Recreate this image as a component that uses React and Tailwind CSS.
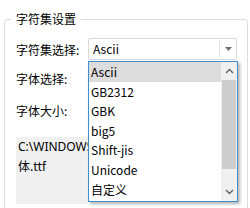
import React from 'react';

const items = ['Ascii', 'GB2312', 'GBK', 'big5', 'Shift-jis', 'Unicode', '自定义'];

function Chevron({ up }) {
  return (
    <svg width="9" height="6" viewBox="0 0 9 6">
      <path d={up ? 'M1 5 L4.5 1.5 L8 5' : 'M1 1 L4.5 4.5 L8 1'} fill="none" stroke="#606060" strokeWidth="1.4" />
    </svg>
  );
}

export default function App() {
  return (
    <div
      className="relative w-[250px] h-[208px] overflow-hidden bg-white text-[12px] text-black"
      style={{ fontFamily: '"Noto Sans CJK SC", "Noto Sans", sans-serif' }}
    >
      <div className="pt-[19px] pl-[4px] pr-[2px]">
        {/* group box */}
        <div className="relative h-[220px] rounded-[3px] border border-[#dcdcdc] pl-[11px] pt-[18px]">
          <div className="absolute left-[6px] top-[-10px] bg-white px-[5px] leading-[18px]">字符集设置</div>

          <div className="flex items-center h-[22px]">
            <span className="w-[72px] leading-[22px] pt-[1px]">字符集选择:</span>
            <div className="flex h-[22px] w-[149px] items-center rounded-[2px] border border-[#d9d9d9] bg-white">
              <span className="flex-1 pl-[4px] leading-[20px]">Ascii</span>
              <div className="flex h-[16px] w-[17px] items-center justify-center border-l border-[#e3e3e3]">
                <svg width="7" height="4" viewBox="0 0 7 4">
                  <path d="M0 0 H7 L3.5 4 Z" fill="#707070" />
                </svg>
              </div>
            </div>
          </div>

          <div className="mt-[10px] leading-[18px]">字体选择:</div>
          <div className="mt-[14px] leading-[18px]">字体大小:</div>

          {/* visible part of the font path box, the rest lies under the open list */}
          <div className="mt-[17px] h-[67px] w-[72px] overflow-hidden whitespace-nowrap bg-[#f0f0f0] pl-[2px] leading-[19px]">
            <div style={{ fontFamily: '"Noto Sans", "Noto Sans CJK SC", sans-serif' }}>C:\WINDOWS</div>
            <div>体.ttf</div>
          </div>
        </div>
      </div>

      {/* dropdown list */}
      <div className="absolute left-[88px] top-[61px] flex h-[141px] w-[150px] border border-[#3d8fd1] bg-white shadow-[2px_2px_3px_rgba(0,0,0,0.3)]">
        <div className="flex-1">
          {items.map((it, i) => (
            <div
              key={it}
              className={`h-[19.6px] pl-[2px] leading-[19.6px] ${i === 0 ? 'bg-[#dcdcdc]' : ''}`}
            >
              {it}
            </div>
          ))}
        </div>
        <div className="flex w-[16px] flex-col bg-[#f0f0f0]">
          <div className="flex h-[18px] items-center justify-center">
            <Chevron up />
          </div>
          <div className="mx-[1px] h-[89px] bg-[#cdcdcd]" />
          <div className="flex-1" />
          <div className="flex h-[18px] items-center justify-center">
            <Chevron />
          </div>
        </div>
      </div>
    </div>
  );
}
